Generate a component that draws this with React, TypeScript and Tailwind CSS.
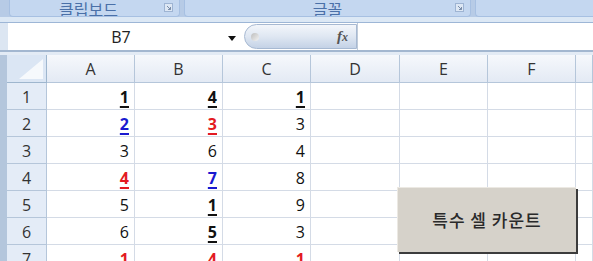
import React from 'react';

type Cell = { v: string; b?: boolean; c?: 'red' | 'blue' };

const rows: Cell[][] = [
  [{ v: '1', b: true }, { v: '4', b: true }, { v: '1', b: true }],
  [{ v: '2', b: true, c: 'blue' }, { v: '3', b: true, c: 'red' }, { v: '3' }],
  [{ v: '3' }, { v: '6' }, { v: '4' }],
  [{ v: '4', b: true, c: 'red' }, { v: '7', b: true, c: 'blue' }, { v: '8' }],
  [{ v: '5' }, { v: '1', b: true }, { v: '9' }],
  [{ v: '6' }, { v: '5', b: true }, { v: '3' }],
  [{ v: '1', b: true, c: 'red' }, { v: '4', b: true, c: 'red' }, { v: '1', b: true, c: 'red' }],
];

const cols = ['A', 'B', 'C', 'D', 'E', 'F', ''];
const gridCols = 'grid grid-cols-[7px_40px_88px_88px_88px_89px_88px_88px_1fr]';

const Launcher = () => (
  <svg width="9" height="9" viewBox="0 0 9 9" className="opacity-70">
    <rect x="0.5" y="0.5" width="8" height="8" fill="#e8eef7" stroke="#8ea6c8" />
    <path d="M3 3 L6.5 6.5 M6.5 4 V6.5 H4" stroke="#5b6f8c" strokeWidth="1" fill="none" />
  </svg>
);

const ValueCell = ({ cell }: { cell?: Cell }) => {
  const color = cell?.c === 'red' ? 'text-[#e31b23]' : cell?.c === 'blue' ? 'text-[#1a1ad0]' : 'text-[#111]';
  return (
    <div className="h-[27px] border-r border-b border-[#d4dbe6] bg-white flex items-center justify-end pr-[5px] pt-[2px]">
      {cell && (
        <span
          className={`${color} text-[16px] leading-none ${cell.b ? 'font-bold underline decoration-2 underline-offset-[3px]' : ''}`}
        >
          {cell.v}
        </span>
      )}
    </div>
  );
};

export default function App() {
  return (
    <div className="w-[593px] h-[261px] overflow-hidden bg-[#dfe8f4] relative" style={{ fontFamily: '"Open Sans", "Noto Sans CJK KR", sans-serif' }}>
      {/* ribbon groups */}
      <div className="h-[17px] flex bg-[#b7cbe6] pl-[9px] gap-[4px]">
        <div className="w-[171px] h-full bg-[#c4d7f0] border-x border-b border-[#a7c0e2] rounded-b-[4px] relative flex items-end justify-center overflow-hidden">
          <span className="text-[16px] leading-none text-[#4a70a8] -mb-[1px] -translate-x-[6px]" style={{ fontFamily: '"Noto Sans CJK KR", sans-serif' }}>클립보드</span>
          <div className="absolute right-[6px] top-[3px]"><Launcher /></div>
        </div>
        <div className="w-[287px] h-full bg-[#c4d7f0] border-x border-b border-[#a7c0e2] rounded-b-[4px] relative flex items-end justify-center overflow-hidden">
          <span className="text-[16px] leading-none text-[#4a70a8] -mb-[1px]" style={{ fontFamily: '"Noto Sans CJK KR", sans-serif' }}>글꼴</span>
          <div className="absolute right-[6px] top-[3px]"><Launcher /></div>
        </div>
        <div className="flex-1 h-full bg-[#c4d7f0] border-l border-b border-[#a7c0e2] rounded-bl-[4px]" />
      </div>
      <div className="h-[6px] bg-[#dce8f5] border-b border-[#9db6d6]" />

      {/* formula bar */}
      <div className="h-[29px] flex bg-white border-b-2 border-[#a3b7d0]">
        <div className="w-[8px] bg-[#dce6f2]" />
        <div className="w-[236px] flex items-center relative">
          <span className="flex-1 text-center text-[16px] text-[#222] pr-[10px]">B7</span>
          <svg width="8" height="5" viewBox="0 0 8 5" className="absolute left-[220px] top-[13px]">
            <path d="M0 0 H8 L4 5 Z" fill="#111" />
          </svg>
        </div>
        <div className="w-[113px] my-[1px] rounded-l-full border border-[#a7b9d2] bg-gradient-to-b from-[#f3f6fb] via-[#dfe7f2] to-[#c4d2e6] flex items-center justify-between pl-[6px] pr-[8px]">
          <div className="w-[8px] h-[8px] rounded-full bg-gradient-to-br from-[#bdbdbd] to-[#f4f4f4]" />
          <span className="text-[15px] italic font-bold text-[#555]" style={{ fontFamily: '"Liberation Serif", serif' }}>
            f<span className="text-[12px]">x</span>
          </span>
        </div>
        <div className="flex-1 border-l border-[#c0cbd9]" />
      </div>
      <div className="h-[3px] bg-[#e3ebf5]" />

      {/* sheet */}
      <div className={gridCols}>
        <div className="h-[28px] bg-[#b4c6dc]" />
        <div className="h-[28px] bg-[#dbe6f4] border-r border-b border-[#9eb6ce] flex items-end justify-end p-[3px]">
          <svg width="24" height="20" viewBox="0 0 24 20">
            <path d="M24 0 V20 H0 Z" fill="#ffffff" opacity="0.75" />
          </svg>
        </div>
        {cols.map((c, i) => (
          <div key={i} className="h-[28px] bg-gradient-to-b from-[#f6f8fc] to-[#e3eaf4] border-r border-b border-[#b5c6da] flex items-center justify-center text-[16px] text-[#333]">
            {c}
          </div>
        ))}
        {rows.map((r, ri) => (
          <React.Fragment key={ri}>
            <div className="h-[27px] bg-[#b4c6dc]" />
            <div className="h-[27px] bg-[#e4ecf7] border-r border-b border-[#b5c6da] flex items-center justify-center text-[16px] text-[#333] pt-[1px]">
              {ri + 1}
            </div>
            <ValueCell cell={r[0]} />
            <ValueCell cell={r[1]} />
            <ValueCell cell={r[2]} />
            <ValueCell />
            <ValueCell />
            <ValueCell />
            <ValueCell />
          </React.Fragment>
        ))}
      </div>

      {/* form button over the sheet */}
      <div className="absolute left-[397px] top-[187px] w-[179px] h-[65px] bg-[#d6d2ca] border-t border-l border-[#ece9e3] shadow-[2px_2px_0_#3c3c3c] flex items-center justify-center">
        <span className="text-[17px] font-medium text-[#2a2a2a] tracking-[1px]" style={{ fontFamily: '"Noto Sans CJK KR", sans-serif' }}>특수 셀 카운트</span>
      </div>
    </div>
  );
}
